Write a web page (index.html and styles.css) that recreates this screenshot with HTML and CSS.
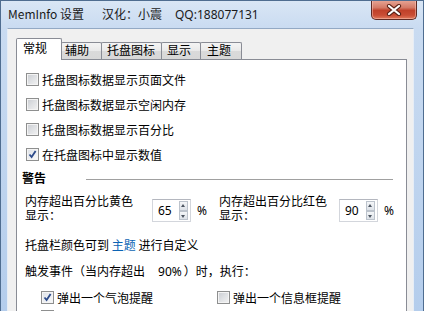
FILE: index.html
```html
<!DOCTYPE html>
<html lang="zh-CN">
<head>
<meta charset="utf-8">
<title>MemInfo 设置</title>
<link rel="stylesheet" href="styles.css">
</head>
<body>
<div class="window">
  <div class="titlebar">
    <span class="t-app">MemInfo 设置</span><span class="t-cn">汉化：小震</span><span class="t-qq">QQ:188077131</span>
    <div class="close">
      <svg width="16" height="12" viewBox="0 0 16 12">
        <path d="M3 2 L13 10 M13 2 L3 10" stroke="#5b2217" stroke-width="4.2" stroke-linecap="round"/>
        <path d="M3 2 L13 10 M13 2 L3 10" stroke="#ffffff" stroke-width="2.2" stroke-linecap="round"/>
      </svg>
    </div>
  </div>
  <div class="client">
    <div class="tabs">
      <div class="tab active">常规</div>
      <div class="tab t2">辅助</div>
      <div class="tab t3">托盘图标</div>
      <div class="tab t4">显示</div>
      <div class="tab t5">主题</div>
    </div>
    <div class="panel">
      <div class="checks">
        <div class="check"><span class="box"></span><span class="lbl">托盘图标数据显示页面文件</span></div>
        <div class="check"><span class="box"></span><span class="lbl">托盘图标数据显示空闲内存</span></div>
        <div class="check"><span class="box"></span><span class="lbl">托盘图标数据显示百分比</span></div>
        <div class="check"><span class="box checked"><svg width="9" height="9" viewBox="0 0 9 9"><path d="M1.5 4.5 L3.6 7 L7.6 1" fill="none" stroke="#2c4a8a" stroke-width="1.8"/></svg></span><span class="lbl">在托盘图标中显示数值</span></div>
      </div>
      <div class="group-head"><span class="gtitle">警告</span><span class="rule"></span></div>
      <div class="spins">
        <div class="spin-item yellow">
          <div class="spin-label"><span class="sl">内存超出百分比黄色</span><span class="sl">显示：</span></div>
          <div class="spinbox"><span class="num">65</span><span class="arrows"><span class="arrow up"></span><span class="arrow down"></span></span></div>
          <span class="pct">%</span>
        </div>
        <div class="spin-item red">
          <div class="spin-label"><span class="sl">内存超出百分比红色</span><span class="sl">显示：</span></div>
          <div class="spinbox"><span class="num">90</span><span class="arrows"><span class="arrow up"></span><span class="arrow down"></span></span></div>
          <span class="pct">%</span>
        </div>
      </div>
      <p class="line first">托盘栏颜色可到 <span class="link">主题</span> 进行自定义</p>
      <p class="line second">触发事件（当内存超出<span class="inline-pct">90%</span>）时，执行：</p>
      <div class="actions">
        <div class="check small"><span class="box checked"><svg width="9" height="9" viewBox="0 0 9 9"><path d="M1.5 4.5 L3.6 7 L7.6 1" fill="none" stroke="#2c4a8a" stroke-width="1.8"/></svg></span><span class="lbl">弹出一个气泡提醒</span></div>
        <div class="check small"><span class="box"></span><span class="lbl">弹出一个信息框提醒</span></div>
        <div class="check small"><span class="box"></span></div>
      </div>
    </div>
  </div>
</div>
</body>
</html>
```
FILE: styles.css
```css
html, body {
  margin: 0;
  padding: 0;
  width: 424px;
  height: 311px;
  overflow: hidden;
  background: #f0f0f0;
}

body {
  font-family: "Noto Sans CJK SC", "Noto Sans", sans-serif;
  font-size: 12px;
  color: #000;
}

.window {
  position: relative;
  box-sizing: border-box;
  width: 424px;
  height: 311px;
  border: 1px solid #4f6d90;
  border-bottom: none;
  background: linear-gradient(to bottom, #d9e6f5 0px, #c9dbf1 28px, #b4cdec 100%);
  padding: 0 9px 0 6px;
  display: flex;
  flex-direction: column;
  overflow: hidden;
}

.titlebar {
  height: 27px;
  line-height: 26px;
  padding-left: 1px;
  color: #1a1a1a;
  white-space: nowrap;
  flex: none;
}

.t-app {
  display: inline-block;
  width: 94px;
}

.t-cn {
  display: inline-block;
  width: 73px;
}

.t-qq {
  font-family: "Noto Sans", sans-serif;
  font-size: 12px;
}

.close {
  position: absolute;
  top: -1px;
  right: 6px;
  width: 46px;
  height: 20px;
  box-sizing: border-box;
  border: 1px solid #5e2a24;
  border-top: none;
  border-radius: 0 0 5px 5px;
  background: linear-gradient(to bottom, #e8a898 0%, #d47a66 40%, #c0412a 55%, #c94d35 80%, #e07a5c 100%);
  box-shadow: inset 0 0 0 1px rgba(255, 210, 200, 0.45);
  display: flex;
  align-items: center;
  justify-content: center;
}

.client {
  flex: 1;
  background: #f0f0f0;
  border-top: 1px solid #93a9c4;
  border-left: 1px solid #e6edf6;
  border-right: 1px solid #e6edf6;
  padding: 9px 6px 0 8px;
  display: flex;
  flex-direction: column;
  min-height: 0;
}

.tabs {
  display: flex;
  align-items: flex-end;
  height: 21px;
  flex: none;
}

.tab {
  box-sizing: border-box;
  height: 17px;
  line-height: 14px;
  border: 1px solid #898c95;
  border-bottom: none;
  border-radius: 2px 2px 0 0;
  background: linear-gradient(to bottom, #f4f4f4 0%, #e9e9e9 50%, #dadada 51%, #d8d8d8 100%);
  padding-left: 5px;
  margin-left: -1px;
  white-space: nowrap;
}

.tab.active {
  position: relative;
  z-index: 1;
  height: 22px;
  line-height: 18px;
  margin-bottom: -1px;
  margin-left: 0;
  width: 46px;
  padding-left: 6px;
  background: #fff;
}

.t2 { width: 41px; padding-left: 3px; }
.t3 { width: 61px; }
.t4 { width: 40px; }
.t5 { width: 42px; padding-left: 6px; }

.panel {
  flex: 1;
  background: #fff;
  border: 1px solid #898c95;
  border-bottom: none;
  padding: 7px 8px 0 8px;
  min-height: 0;
  overflow: hidden;
}

.checks {
  display: flex;
  flex-direction: column;
}

.check {
  display: flex;
  align-items: center;
  height: 25px;
  white-space: nowrap;
}

.check.small {
  height: 19px;
}

.box {
  box-sizing: border-box;
  width: 13px;
  height: 13px;
  margin-left: 1px;
  margin-right: 3px;
  border: 1px solid #8e8f8f;
  background: linear-gradient(135deg, #c9ccd1 0%, #dfe1e4 50%, #f3f3f3 100%);
  box-shadow: inset 0 0 0 1px #f4f4f4;
  display: flex;
  align-items: center;
  justify-content: center;
  flex: none;
}

.box.checked {
  background: linear-gradient(135deg, #dde1e7 0%, #eef0f3 60%, #fafafa 100%);
}

.lbl {
  line-height: 16px;
}

.group-head {
  display: flex;
  align-items: center;
  height: 16px;
  line-height: 16px;
  margin-top: 3px;
  margin-left: -3px;
}

.gtitle {
  font-weight: bold;
}

.rule {
  flex: 1;
  height: 1px;
  background: #a0a0a0;
  margin: 2px 5px 0 40px;
}

.spins {
  display: grid;
  grid-template-columns: 194px auto;
  margin-top: 10px;
}

.spin-item {
  display: flex;
  align-items: center;
  height: 27px;
}

.spin-label {
  display: flex;
  flex-direction: column;
  white-space: nowrap;
}

.sl {
  display: block;
  height: 13.5px;
  line-height: 13.5px;
  font-family: "Liberation Sans", "Noto Sans CJK SC", sans-serif;
  font-size: 12px;
}

.yellow .spin-label { width: 127px; }
.red .spin-label { width: 120px; }

.spinbox {
  box-sizing: border-box;
  width: 39px;
  height: 23px;
  border: 1px solid #d3d6dc;
  border-top-color: #b4b7bf;
  background: #fff;
  display: flex;
  align-items: center;
  justify-content: space-between;
  padding: 0 1px 0 5px;
  margin-top: 2px;
}

.num {
  font-family: "Noto Sans", sans-serif;
  font-size: 12px;
}

.arrows {
  display: flex;
  flex-direction: column;
  width: 9px;
  height: 19px;
  margin-right: 1px;
}

.arrow {
  flex: 1;
  box-sizing: border-box;
  border: 1px solid #bcc3cc;
  background: linear-gradient(to bottom, #f4f6f8, #dde2e8);
  position: relative;
}

.arrow::after {
  content: "";
  position: absolute;
  left: 1px;
  width: 0;
  height: 0;
  border-left: 2.5px solid transparent;
  border-right: 2.5px solid transparent;
}

.arrow.up::after {
  top: 2px;
  border-bottom: 3px solid #4d5561;
}

.arrow.down::after {
  top: 3px;
  border-top: 3px solid #4d5561;
}

.pct {
  font-family: "Noto Sans", sans-serif;
  margin-left: 6px;
  margin-top: 1px;
}

.line {
  margin: 0;
  line-height: 16px;
  white-space: nowrap;
}

.line.first {
  margin-top: 14px;
}

.line.second {
  margin-top: 10px;
}

.link {
  color: #0c64b4;
}

.inline-pct {
  font-family: "Noto Sans", sans-serif;
  margin: 0 2px 0 13px;
}

.actions {
  display: grid;
  grid-template-columns: 176px auto;
  padding-left: 15px;
  margin-top: 8px;
}
```
